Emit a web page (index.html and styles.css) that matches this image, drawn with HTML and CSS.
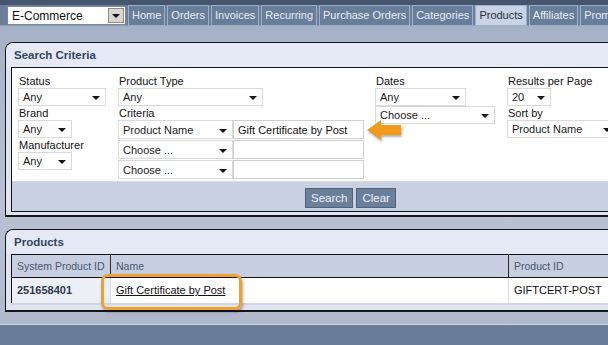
FILE: index.html
```html
<!DOCTYPE html>
<html lang="en">
<head>
  <meta charset="UTF-8" />
  <title>Products - Search</title>
  <link rel="stylesheet" href="styles.css">
</head>
<body>

  <div class="top-band"></div>

  <div class="nav">
    <div class="store-select">
      <span class="store-name">E-Commerce</span>
      <span class="store-btn"><i class="tri"></i></span>
    </div>
    <a class="tab">Home</a>
    <a class="tab">Orders</a>
    <a class="tab">Invoices</a>
    <a class="tab">Recurring</a>
    <a class="tab">Purchase Orders</a>
    <a class="tab">Categories</a>
    <a class="tab active">Products</a>
    <a class="tab">Affiliates</a>
    <a class="tab">Promotions</a>
  </div>

  <div class="page">

    <!-- search criteria -->
    <div class="panel">
      <div class="panel-head">Search Criteria</div>
      <div class="panel-body">
        <div class="inner">
          <div class="criteria">
            <div class="col col-1">
              <label>Status</label>
              <div class="dd w88"><span>Any</span><i class="tri"></i></div>
              <label>Brand</label>
              <div class="dd w54"><span>Any</span><i class="tri"></i></div>
              <label>Manufacturer</label>
              <div class="dd w54"><span>Any</span><i class="tri"></i></div>
            </div>

            <div class="col col-2">
              <label>Product Type</label>
              <div class="dd w145"><span>Any</span><i class="tri"></i></div>
              <label>Criteria</label>
              <div class="crit-row">
                <div class="dd tall w115"><span>Product Name</span><i class="tri"></i></div>
                <input class="txt" type="text" value="Gift Certificate by Post">
                <svg class="pointer" width="40" height="24" viewBox="0 0 40 24">
                  <polygon points="2,12 16,2 16,7 36,7 36,17 16,17 16,22" fill="#f29a1c"/>
                </svg>
              </div>
              <div class="crit-row">
                <div class="dd tall w115"><span>Choose ...</span><i class="tri"></i></div>
                <input class="txt" type="text" value="">
              </div>
              <div class="crit-row">
                <div class="dd tall w115"><span>Choose ...</span><i class="tri"></i></div>
                <input class="txt" type="text" value="">
              </div>
            </div>

            <div class="col col-3">
              <label>Dates</label>
              <div class="dd w91"><span>Any</span><i class="tri"></i></div>
              <div class="dd w120"><span>Choose ...</span><i class="tri"></i></div>
            </div>

            <div class="col col-4">
              <label>Results per Page</label>
              <div class="dd w44"><span>20</span><i class="tri"></i></div>
              <label>Sort by</label>
              <div class="dd w110"><span>Product Name</span><i class="tri"></i></div>
            </div>
          </div>

          <div class="actions">
            <button class="btn">Search</button>
            <button class="btn">Clear</button>
          </div>
        </div>
      </div>
    </div>

    <!-- results -->
    <div class="panel products">
      <div class="panel-head">Products</div>
      <div class="panel-body">
        <table class="grid">
          <colgroup>
            <col class="w-id">
            <col class="w-name">
            <col>
          </colgroup>
          <thead>
            <tr>
              <th>System Product ID</th>
              <th>Name</th>
              <th>Product ID</th>
            </tr>
          </thead>
          <tbody>
            <tr>
              <td class="c-id">251658401</td>
              <td><a href="#">Gift Certificate by Post</a></td>
              <td>GIFTCERT-POST</td>
            </tr>
          </tbody>
        </table>
      </div>
      <div class="highlight"></div>
    </div>

  </div>

  <div class="footer"></div>

</body>
</html>
```

FILE: styles.css
```css
* {
  box-sizing: border-box;
}

body {
  margin: 0;
  width: 608px;
  height: 345px;
  overflow: hidden;
  font-family: "Liberation Sans", Arial, sans-serif;
  font-size: 11px;
  color: #111;
  background: linear-gradient(#a3afc4, #b9c1d3 60%, #aeb8cb);
  position: relative;
}

.top-band {
  height: 5px;
  background: #46566e;
}

/* nav */
.nav {
  display: flex;
  height: 21px;
  padding-left: 7px;
  background: #6b7f9c;
  border-bottom: 1px solid #8d9cb5;
  white-space: nowrap;
}

.store-select {
  display: flex;
  flex-shrink: 0;
  align-items: center;
  width: 119px;
  height: 19px;
  margin-top: 1px;
  background: #fff;
  border: 1px solid #7a8799;
  font-size: 12px;
}

.store-name {
  flex: 1;
  padding-left: 4px;
}

.store-btn {
  display: flex;
  align-items: center;
  justify-content: center;
  width: 16px;
  height: 15px;
  margin-right: 1px;
  background: #d8d6d0;
  border: 1px solid #8a8a8a;
}

.tab {
  display: block;
  flex-shrink: 0;
  height: 21px;
  line-height: 19px;
  padding: 0 3px;
  margin-left: 2px;
  border: 1px solid #9eafc7;
  background: #687d9a;
  color: #e6edf5;
  font-size: 11px;
}

.tab.active {
  background: #c8d4e5;
  color: #26303e;
}

/* panels */
.page {
  padding: 16px 0 0 5px;
}

.panel {
  position: relative;
  width: 684px;
  background: #dfe4f1;
  border: 1px solid #151515;
  border-right: none;
  border-bottom: 2px solid #151515;
  border-radius: 8px 0 0 0;
}

.panel-head {
  height: 24px;
  line-height: 25px;
  padding-left: 8px;
  background: #e4e9f5;
  border-radius: 8px 0 0 0;
  font-weight: bold;
  font-size: 11.5px;
  color: #33455e;
}

.panel-body {
  padding: 0 0 3px 5px;
}

.inner {
  border: 1px solid #111;
  border-right: none;
}

.criteria {
  display: flex;
  background: #fff;
  padding: 6px 0 1px 6px;
  border-bottom: 1px solid #d6dbe6;
}

.col {
  display: flex;
  flex-direction: column;
  align-items: flex-start;
}

.col-1 { width: 100px; }
.col-2 { width: 257px; }
.col-3 { width: 132px; }

.col label {
  height: 14px;
  line-height: 14px;
  padding-left: 1px;
  color: #111;
}

/* flat dropdowns */
.dd {
  display: flex;
  align-items: center;
  height: 18px;
  background: #fff;
  border: 1px solid #d9d9d9;
  font-size: 11px;
  color: #1a1a1a;
}

.dd span {
  flex: 1;
  padding-left: 4px;
  white-space: nowrap;
}

.dd .tri {
  margin: 2px 5px 0 4px;
}

.dd.tall {
  height: 19px;
}

.tri {
  display: block;
  width: 0;
  height: 0;
  border-left: 4px solid transparent;
  border-right: 4px solid transparent;
  border-top: 4px solid #111;
}

.w44 { width: 44px; }
.w54 { width: 54px; }
.w88 { width: 88px; }
.w91 { width: 91px; }
.w110 { width: 110px; }
.w115 { width: 115px; }
.w120 { width: 120px; }
.w145 { width: 145px; }

.crit-row {
  position: relative;
  display: flex;
  margin-bottom: 1px;
}

.txt {
  width: 131px;
  height: 19px;
  margin: 0;
  padding: 0 4px;
  border: 1px solid #cfcfcf;
  font-family: inherit;
  font-size: 11px;
  color: #111;
}

.pointer {
  position: absolute;
  left: 247px;
  top: -2px;
  filter: drop-shadow(1px 2px 1px rgba(0, 0, 0, 0.3));
}

.actions {
  display: flex;
  justify-content: center;
  gap: 3px;
  height: 29px;
  padding-top: 6px;
  background: #c9d0e1;
}

.btn {
  height: 20px;
  padding: 0 5px;
  background: #6b7f9b;
  border: 1px solid #4f617c;
  color: #eef2f8;
  font-family: inherit;
  font-size: 11.5px;
}

/* products */
.products {
  margin-top: 12px;
}

.products .panel-body {
  padding-bottom: 5px;
}

.grid {
  width: 100%;
  table-layout: fixed;
  border-collapse: collapse;
  border-top: 1px solid #111;
  border-left: 1px solid #111;
  font-size: 11px;
}

.w-id { width: 99px; }
.w-name { width: 398px; }

.grid th {
  height: 23px;
  padding: 0 4px 0 5px;
  text-align: left;
  font-weight: normal;
  font-size: 10.5px;
  white-space: nowrap;
  overflow: hidden;
  color: #4b5870;
  background: #c6cee0;
  border-bottom: 1px solid #111;
  border-right: 1px solid #2a2a2a;
}

.grid td {
  height: 26px;
  padding: 0 5px;
  white-space: nowrap;
  background: #fff;
  border-right: 1px solid #d8dce6;
  border-bottom: 2px solid #d0d5e0;
}

.grid td.c-id {
  background: #eceff6;
  font-weight: bold;
  color: #2c3a52;
}

.grid a {
  color: #111;
}

.highlight {
  position: absolute;
  left: 95px;
  top: 44px;
  width: 141px;
  height: 36px;
  border: 3px solid #efa12e;
  border-radius: 7px;
  box-shadow: 1px 2px 3px rgba(0, 0, 0, 0.35);
}

.footer {
  position: absolute;
  left: 0;
  right: 0;
  bottom: 0;
  height: 21px;
  background: #687c98;
  border-top: 1px solid #d0d7e3;
}
```
